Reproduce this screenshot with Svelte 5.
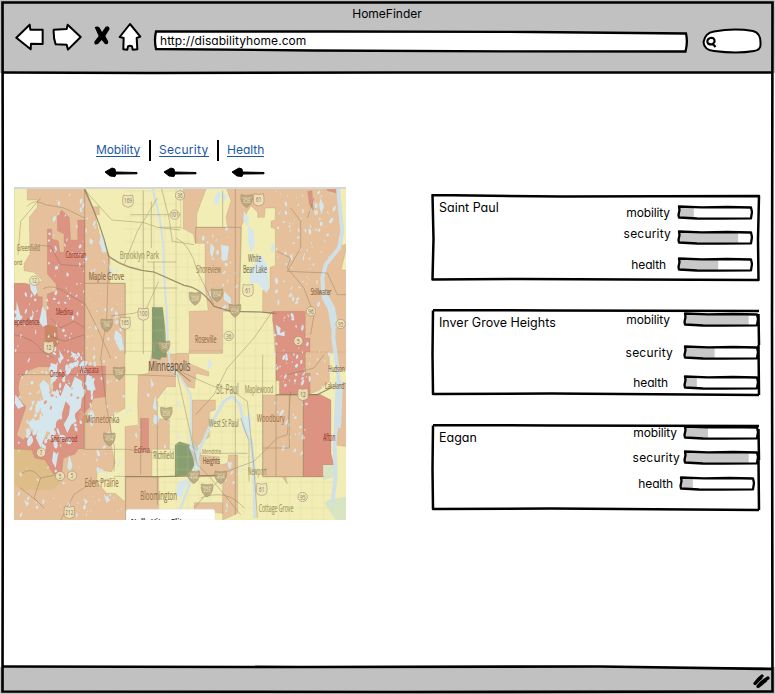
<script>
  const cards = [
    { name: 'Saint Paul', rows: [
      { label: 'mobility', gap: 11, pull: 7, right: 6, drop: -0.5, value: 20 },
      { label: 'security', gap: 5, pull: 6, right: 6, drop: 4, value: 80 },
      { label: 'health', gap: 15, pull: 11, right: 6, drop: -0.5, value: 53 } ] },
    { name: 'Inver Grove Heights', rows: [
      { label: 'mobility', gap: 3, pull: 13, right: 0, drop: 0, value: 86 },
      { label: 'security', gap: 17, pull: 10, right: 0, drop: -0.5, value: 40 },
      { label: 'health', gap: 14, pull: 15, right: 0, drop: 0, value: 16 } ] },
    { name: 'Eagan', rows: [
      { label: 'mobility', gap: 1, pull: 6, right: 0, drop: 0, value: 31 },
      { label: 'security', gap: 9, pull: 3, right: 0, drop: -0.5, value: 86 },
      { label: 'health', gap: 10, pull: 6, right: 4, drop: 0, value: 16 } ] }
  ];
  const links = ['Mobility', 'Security', 'Health'];

  let seed = 71;
  const rnd = () => (seed = (seed * 16807) % 2147483647) / 2147483647;
  const scatter = (zones, size) => zones.flatMap(([x, y, w, h, n]) =>
    Array.from({ length: n }, () => {
      const s = rnd();
      return { x: x + rnd() * w, y: y + rnd() * h, rx: (1 + s * s * 3.4) * size, ry: (2 + rnd() * s * 8) * size, a: rnd() * 60 - 20 };
    })
  );
  // Small lakes scattered over the suburbs: [x, y, width, height, count]
  const ponds = scatter([
    [90, 10, 130, 340, 45], [220, 60, 110, 300, 18], [0, 300, 330, 190, 70],
    [560, 120, 110, 240, 26], [785, 10, 180, 340, 90], [0, 480, 250, 180, 60],
    [10, 760, 330, 225, 55], [340, 600, 160, 200, 16], [780, 380, 110, 230, 44],
    [260, 490, 90, 300, 20], [780, 640, 100, 160, 22], [850, 490, 120, 130, 14], [630, 790, 60, 180, 14]
  ], 1.1);
  // Bays and islands that break up the shore of Lake Minnetonka
  const bays = scatter([[110, 510, 120, 120, 22], [50, 600, 190, 130, 44], [40, 690, 130, 80, 26]], 2.1);
  const islands = scatter([[70, 600, 160, 130, 16]], 1.3);

  const places = [
    ['Greenfield', 8, 188, 70, 28, '#9c8455'], ['ord', 0, 232, 24, 22, '#9c8455'],
    ['Corcoran', 155, 209, 62, 28, '#a13f32'], ['Brooklyn Park', 317, 214, 118, 34, '#a49a66'],
    ['Maple Grove', 224, 276, 106, 33, '#87683f'], ['Medina', 125, 382, 52, 27, '#a13f32'],
    ['ependence', 0, 411, 76, 27, '#93473c'], ['Shoreview', 547, 256, 74, 30, '#a18057'],
    ['White', 702, 222, 40, 31, '#77725b'], ['Bear Lake', 687, 256, 72, 31, '#77725b'],
    ['Stillwater', 890, 321, 62, 25, '#805f42'], ['Roseville', 543, 464, 64, 31, '#967047'],
    ['Orono', 107, 566, 44, 26, '#a13f32'], ['Wayzata', 196, 554, 58, 28, '#a13f32'],
    ['Minneapolis', 403, 550, 126, 41, '#5b5444'], ['Minnetonka', 213, 706, 103, 34, '#9d7650'],
    ['Shorewood', 110, 762, 80, 27, '#a13f32'], ['Edina', 360, 795, 48, 29, '#a4594c'],
    ['Richfield', 418, 814, 62, 34, '#92875a'], ['Eden Prairie', 212, 898, 102, 36, '#a27c4e'],
    ['Bloomington', 379, 936, 110, 36, '#987c52'], ['St. Paul', 607, 618, 67, 42, '#a09366'],
    ['Maplewood', 692, 615, 86, 30, '#a39664'], ['Hudson', 943, 552, 49, 26, '#866146'],
    ['Lakeland', 933, 604, 58, 26, '#8a7557'], ['Woodbury', 728, 701, 84, 34, '#9e754d'],
    ['West St Paul', 584, 718, 90, 33, '#91885e'], ['Afton', 928, 758, 36, 30, '#9a4037'],
    ['Mendota', 564, 798, 56, 24, '#a49762'], ['Heights', 566, 828, 52, 29, '#785d42'],
    ['Newport', 702, 862, 56, 30, '#9d9160'], ['Cottage Grove', 734, 972, 104, 33, '#a39865']
  ];
  const shields = [
    ['169', 342, 38, 1], ['101', 482, 80, 0], ['12', 61, 278, 0], ['165', 333, 404, 1], ['100', 388, 377, 1],
    ['12', 104, 477, 1], ['94', 278, 410, 2], ['94', 450, 476, 2], ['35E', 698, 37, 2], ['61', 734, 34, 1],
    ['35W', 543, 330, 2], ['694', 609, 320, 2], ['694', 663, 366, 2], ['61', 702, 306, 1], ['36', 644, 444, 0],
    ['96', 891, 370, 0], ['5', 853, 459, 0], ['95', 980, 408, 0], ['36', 498, 22, 0], ['394', 315, 554, 2],
    ['494', 286, 752, 2], ['35W', 457, 675, 2], ['7', 81, 794, 0], ['5', 138, 864, 0], ['5', 174, 863, 0],
    ['212', 166, 972, 1], ['494', 539, 865, 2], ['494', 620, 866, 2], ['35E', 579, 905, 2],
    ['61', 743, 903, 1], ['95', 866, 927, 0], ['12', 867, 618, 1]
  ];
  const roads = [
    'M210 4 Q262 110 284 205 L278 390 L260 510 L278 660 L302 780 L300 850',
    'M212 6 L293 96 L390 104 L430 118 L498 126', 'M288 210 Q340 246 420 252 L510 292 Q560 298 600 355 L650 370 L740 372 L790 376',
    'M212 4 V786', 'M86 302 Q120 285 165 320 L214 348 L250 420 L290 510', 'M212 286 H334 V498', 'M0 440 Q60 450 85 490 L120 510',
    'M388 8 V498', 'M430 30 L370 130 L330 230', 'M442 0 L465 90 L475 160 L540 170', 'M434 280 L398 360 L360 376 L290 384',
    'M350 80 H500 M400 222 H486 M434 118 H500 M412 40 V180 M420 222 V470 M390 300 H490',
    'M12 560 H360 L486 565', 'M212 784 H340 L450 798', 'M300 865 L435 866 L620 862 L652 845 L720 820 L790 750 L820 740 L830 610',
    'M486 150 Q530 170 550 250 L600 350', 'M664 0 V980', 'M746 500 V866 H930', 'M786 620 H910 L950 600 L996 585',
    'M868 620 V866 M826 620 V780 H746', 'M545 118 H682 L676 368 M545 118 V166 M626 8 V118',
    'M774 372 L720 450 L640 540 L600 620 L545 680', 'M486 545 L520 560 L600 596 L650 605 L700 640 L720 840 L730 990',
    'M335 866 V996', 'M430 640 V950 M380 690 V860', 'M830 60 L860 100 L860 180 L820 250 L940 255 L970 320 L996 320',
    'M790 190 L830 210 L820 240 L870 300 L900 380 L890 440', 'M786 500 V866 M900 30 L880 90', 'M930 500 L900 540 L820 560',
    'M140 996 L180 920 L230 885 L300 870', 'M20 860 Q50 830 80 870 L60 930 L90 960 M80 870 L130 860 M20 900 L70 940',
    'M110 390 L140 420 L180 400 L212 420 M100 440 L150 460 L212 440', 'M490 560 L550 830 L590 870 L680 980',
    'M620 796 H700 M680 690 L705 760 V880 M540 960 L620 870', 'M40 55 Q60 30 95 50 L150 60 L212 90', 'M12 200 L20 100 L80 30',
    'M60 170 L110 175 L140 230 L212 235', 'M560 930 Q640 900 690 960'
  ];
</script>

{#snippet place(t, x, y, w, size, color)}
  <text {x} {y} font-size={size} textLength={w} lengthAdjust="spacingAndGlyphs" fill={color} stroke={color} stroke-width=".5">{t}</text>
{/snippet}

<div class="window">
  <header>
    <div class="title">HomeFinder</div>
    <div class="toolbar">
      <svg class="back" width="30" height="32" viewBox="45 66 90 96"><path class="ink" d="M49 113 L89 74 L91 89 L128 89 L128 132 L93 131 L92 148 Z" /></svg>
      <svg class="next" width="30" height="32" viewBox="156 66 90 96"><path class="ink" d="M161 89 L200 87 L203 74 L242 111 L204 149 L200 134 L167 133 Q160 115 161 89 Z" /></svg>
      <svg class="stop" width="20" height="32" viewBox="276 66 60 96"><path d="M284 82 Q292 76 299 83 L306 96 L317 80 Q328 76 329 87 L316 108 L325 125 Q324 136 315 132 L305 120 L294 132 Q282 137 283 125 L296 108 Z" /></svg>
      <svg class="home" width="26" height="32" viewBox="351 66 78 96"><path class="ink" d="M359 111 L390 72 L421 110 L410 114 L412 148 L398 149 L396 139 Q390 135 384 139 L382 149 L370 148 L371 114 Z" /></svg>
      <div class="url">
        <svg width="536" height="32" viewBox="0 0 536 32"><path d="M3 9.500 L180 9.500 L380 10 L533 11.5 Q535 20 532.500 29.500 L350 29.300 L160 28.500 L3 27 Q1 18 3 9.500 Z" fill="#fff" stroke="#000" stroke-width="2.3" /></svg>
        <span>http://disabilityhome.com</span>
      </div>
      <svg class="search" width="62" height="32" viewBox="0 0 62 32"><path d="M13 9.500 Q33 6 52 9 Q60 11 59.500 22 Q60 28 53 29 Q36 32 13 29 Q3 28 2.500 20 Q4 11 13 9.500 Z" fill="#fff" stroke="#000" stroke-width="2" /><path d="M9 16 Q14 15 13.500 20 Q11 24 7 21.500 Q5 18 9 16 M11.500 21.500 L14.500 25" fill="none" stroke="#000" stroke-width="2.2" /></svg>
    </div>
  </header>

  <main>
    <section class="left">
      <nav>
        {#each links as link, i}
          {#if i}<i class="sep"></i>{/if}
          <div class="tab tab{i}">
            <a href="#{link}">{link}</a>
            <svg width="33" height="12" viewBox="0 0 33 12"><path d="M0 5 L7 1 L10 2 L10.500 5 L32 5.500 V6.800 L11 7 L10 9.500 L5 9 Z" stroke="#000" stroke-width="1" stroke-linejoin="round" /></svg>
          </div>
        {/each}
      </nav>
      <svg class="map" width="332" height="333" viewBox="0 -3 996 999" font-family="'Open Sans', sans-serif">
        <defs>
          <pattern id="streets" width="34" height="38" patternUnits="userSpaceOnUse"><path d="M0 9 H34 M11 0 V38" stroke="#d5cd91" stroke-width="1.5" fill="none" opacity=".5" /></pattern>
        </defs>
        <rect y="-3" width="996" height="999" fill="#e6c09a" />
        <g stroke="#a08a68" stroke-opacity=".45" stroke-width="1.500">
          <g transform="translate(-12 -12)">
            <path class="y" d="M12 10H52V48H82V70L58 100L60 210L42 240V260L72 265L98 290L70 300L12 298Z" />
            <path class="y" d="M225 10H520V510H345V298H300V220L280 170L268 150L255 92H268V68H248Z" />
            <path class="r" d="M112 135H125V165L145 170L150 205H162V150L142 140V98L155 78L178 100L182 168H203V108H224V520H110V418L112 330L140 320L138 300L112 270Z" />
            <path class="r" d="M12 298H45L75 310L85 338H97V395L110 420V520H12Z" />
            <path d="M105 420L140 430L145 480L120 500L105 480Z" fill="#cd8767" />
            <path class="g" d="M426 370H458L465 430L470 520H426Z" />
          </g>
          <g transform="translate(486 -12)">
            <path class="y" d="M0 10H14V130L52 150L58 178H87V310L97 380L40 382V510H0Z" />
            <path class="y" d="M92 10H150L165 50L150 100L155 130H62V90Z" />
            <path class="y" d="M213 85L225 65L245 85V100L265 100L268 72H298V108L285 112V130L298 135V245L282 250V315L260 320V385L295 390L290 400L298 520H140V382H188L192 240L195 130Z" />
            <path class="y" d="M485 10H512V180L498 185L490 60ZM512 190L495 258H512Z" />
            <path class="r" d="M290 382H388V462H402V520H300L298 450L290 410ZM395 22L408 20L412 80L400 60ZM450 12H485V28L455 20Z" />
          </g>
          <g transform="translate(-12 486)">
            <path d="M12 297L65 300L110 330L155 395L125 420H30L12 400Z" fill="#dfbd88" stroke="none" />
            <path class="r" fill-rule="evenodd" d="M12 8H215L235 48H287V140L250 145L240 170L222 190V297H205L195 312L160 325L155 372H130L105 330L75 325L65 300L12 297ZM30 85L60 60L85 50L115 50L130 70V250L100 270L60 245L40 270L20 255L38 200L48 170L30 150L25 110Z" />
            <path class="y" d="M345 4H426L415 70L385 75L383 160L385 225L345 230V455L315 430L290 430L260 395L262 360L305 365L315 340L305 290L300 200L345 175Z" />
            <path class="y" d="M440 150L470 110L512 110V300H478V210L440 205Z" />
            <path class="y" d="M426 298H512V480H446V382H426Z" />
            <path class="r" d="M393 205H416V300H393Z" />
            <path class="g" d="M426 0H464L450 30L426 25Z" />
          </g>
          <g transform="translate(486 486)">
            <rect x="0" y="10" width="512" height="500" fill="#f1edb5" stroke="none" />
            <path class="o" d="M0 10H38V40L98 65V78L60 70L55 115L35 110L0 60ZM40 10H138V2H40ZM48 150H118V180L100 185V260L60 290L48 270ZM70 315L130 320V345L155 340L158 315H185V490L140 510V380H65ZM55 458H140V490L55 480ZM260 135H382V380H330L334 402L318 380H260Z" />
            <path class="o" d="M388 6H460V95L430 120L402 132V70H388ZM482 6H512V60L485 60ZM495 100H512V290L480 285L490 180Z" />
            <path class="r" d="M300 8H388V70H402V132H310V92H300ZM382 135L430 132L465 150V310L474 345H442V380H382Z" />
            <path d="M442 345H475V380L442 390ZM455 450L512 440V512H480L445 460Z" fill="#d8e5c2" stroke="none" />
            <path class="g" d="M-3 285L10 275L45 285L55 345L40 375L-3 378Z" />
            <path d="M38 290L55 275L75 310L60 345Z" fill="#c8cec2" />
          </g>
        </g>
        <g fill="url(#streets)"><path d="M333 0H498V490H333ZM486 120H570V380H486ZM626 370H780V980H626ZM486 600H700V980H486ZM700 860H960V996H700ZM425 600H486V950H425Z" /></g>
        <g fill="#d5e6ed">
          {#each ponds as p}<ellipse cx={p.x} cy={p.y} rx={p.rx} ry={p.ry} transform="rotate({p.a} {p.x} {p.y})" />{/each}
          {#each bays as p}<ellipse cx={p.x} cy={p.y} rx={p.rx} ry={p.ry} transform="rotate({p.a} {p.x} {p.y})" />{/each}
          <path d="M262 134L272 170L280 190L268 195L256 165ZM228 150L238 158L234 170L226 164ZM46 268L62 280L70 312L62 325L50 305ZM85 355L95 370L100 410L86 416L76 400ZM8 340L20 385L14 410L6 390ZM305 425L322 440L330 485L318 488L300 450ZM282 225L300 255L292 265Z" />
          <path d="M610 10L622 15L612 50L598 45ZM624 15L640 22L628 45ZM703 110L720 130L722 175L710 190L702 160ZM690 70L705 90L700 115L688 95ZM708 250L740 200L760 230L765 300L758 315L730 285L706 285ZM620 170L645 175L640 215L625 220ZM590 165L602 180L594 210L588 195ZM630 310L650 330L652 350L630 335ZM785 410L800 420L798 435L812 430V445L790 440ZM920 30L930 55L922 80L915 50ZM774 165L782 172L778 195L770 190Z" />
          <path d="M76 590L88 575L105 590L108 620L122 608L140 625L155 585L170 600L182 566L205 580L202 610L210 580L200 660L180 680L188 700L172 710L160 735L150 710L165 680L168 655L155 640L140 690L128 700L118 735L98 730L80 780L66 750L72 725L52 725L42 705L58 690L70 705L88 680L80 660L64 655L70 640L88 635Z" />
          <path d="M218 555L235 570L245 605L230 610L215 590ZM110 525L130 530L128 565L108 560ZM135 485L150 510L140 520ZM170 490L190 500L178 512ZM85 765L96 775L92 800L80 785ZM118 790L132 800L125 840L114 820ZM165 800L175 830L170 850L160 840ZM4 620L20 640L30 655L12 662L2 645ZM424 620L430 670L416 660ZM410 570L420 590L412 600ZM420 680L438 685L430 710L418 705ZM490 885L525 870L500 930L488 920ZM690 690L710 675V730L696 740ZM585 510L594 530L580 550ZM252 840L270 845L262 855ZM208 930L222 940L215 950ZM30 935L45 945L38 956ZM270 920L290 935L278 945Z" />
        </g>
        <g fill="#e0a489">{#each islands as p}<ellipse cx={p.x} cy={p.y} rx={p.rx} ry={p.ry} transform="rotate({p.a} {p.x} {p.y})" />{/each}</g>
        <g fill="none" stroke="#cfe1e6" stroke-linejoin="round">
          <path d="M416 0L438 95L448 170L450 260L458 370L462 470L468 540L500 570L530 620L530 780L555 800" stroke-width="6" />
          <path d="M555 850L550 800L590 710L630 640L655 625L678 650L690 720L712 760L720 850L722 990" stroke-width="9" />
          <path d="M555 800L530 880L500 960L488 985" stroke-width="7" />
          <path d="M972 0L985 130L975 180L935 230L925 270L928 320L960 380L958 450L970 540L978 610L968 700L962 760L965 860L955 950" stroke-width="12" />
          <path d="M932 325L952 360L962 420M976 580L970 720" stroke-width="22" />
        </g>
        <g fill="none" stroke="#74684f" stroke-width="2" opacity=".5" stroke-linejoin="round">{#each roads as d}<path {d} />{/each}</g>
        <g fill="none" stroke="#817555" stroke-width="3.500" opacity=".65"><path d="M212 4Q262 110 284 205Q340 246 420 252L510 292Q560 298 600 355L650 370L740 372L780 376M786 620H910L950 600M486 545L530 580M335 866L435 866L620 862" /></g>
        {#each shields as [t, x, y, k]}
          <g transform="translate({x} {y})" fill={k === 2 ? '#b3a37b' : '#efe4bd'} stroke="#a08d65" stroke-width="2" opacity=".85">
            {#if k === 0}<circle r="14" />{:else if k === 1}<path d="M-14-17Q0-12 14-17Q19 8 12 16L0 20L-12 16Q-19 8-14-17Z" />{:else}<path d="M-17-17Q0-12 17-17Q21 10 0 22Q-21 10-17-17Z" /><path d="M-17-9H17" stroke="#d9c79a" />{/if}
            <text y="8" font-size="20" text-anchor="middle" textLength={t.length * 8} lengthAdjust="spacingAndGlyphs" stroke="none" fill={k === 2 ? '#f0e4c0' : '#776846'}>{t}</text>
          </g>
        {/each}
        {#each places as [t, x, y, w, size, color]}{@render place(t, x, y, w, size, color)}{/each}
        <path d="M336 996V970Q336 964 344 964H594Q603 964 603 972V996Z" fill="#fff" stroke="#ddd" stroke-width="1" />
        <text x="350" y="1010" font-size="24" font-weight="700" textLength="155" lengthAdjust="spacingAndGlyphs" fill="#333">Nulla Vitae Elit</text>
        <path d="M0 0H996" stroke="#d6d6d6" stroke-width="6" />
      </svg>
    </section>

    <section class="right">
      {#each cards as card, c}
        <article>
          <h2 class="name{c}">{card.name}</h2>
          <svg class="edge" width="330" height="90" viewBox="0 0 330 90">
            <path d={c ? 'M2 1L120 1.500L328 2M2 1.500L1.500 45L2 85L120 84.500L328 86M327.500 5L328 36M327.500 36L328 86' : 'M1.500 1L130 2.500L328 2L327 45L327.500 86L200 85.500L90 85L1.500 85.500L2.500 45Z'} />
          </svg>
          <div class="metrics">
            {#each card.rows as row}
              <div class="row" style="margin-top:{row.gap}px;padding-right:{row.right}px">
                <span class={row.label} style="margin-right:{row.pull}px">{row.label}</span>
                <svg width="76" height="15" viewBox="0 0 76 15" style="margin-top:{row.drop}px">
                  <path d="M2 2H74V13H2Z" fill="#fff" />
                  <rect x="2" y="2" width={row.value * 0.74} height="11" fill="#c8c8c8" />
                  <path d="M2 1.500L25 2.300L50 2L74 2.500L75 7L74 13.300L40 13.700L20 13.500L2 12.500L1.500 10L2.500 5Z" fill="none" stroke="#000" stroke-width="2.3" stroke-linejoin="round" />
                </svg>
              </div>
            {/each}
          </div>
        </article>
      {/each}
    </section>
  </main>

  <footer><svg width="18" height="15" viewBox="0 0 18 15"><path d="M2 9.500Q5 5 9 2M5 12.500Q8 8 15 4" fill="none" stroke="#000" stroke-width="3.200" stroke-linecap="round" /><path d="M2 10.500L9 4M6 13L14 6.500" stroke="#000" stroke-width="1.500" /></svg></footer>

  <svg class="frame" width="775" height="694" viewBox="0 0 775 694">
    <path d="M2.500 2.500H772.500L772 320L772.500 691.500L400 692L2.500 691.500L3 350Z" />
    <path d="M3 72.500L150 73L400 72.500L773 72.500M3 666.500L300 667L600 666.500L773 669" />
  </svg>
</div>

<style>
  :global(body) { margin: 0; background: #fff; }
  .window { position: relative; width: 775px; height: 694px; display: flex; flex-direction: column; overflow: hidden; background: #fff; color: #000; font: 12px/16px Inter, 'Noto Sans', sans-serif; font-feature-settings: 'cv11'; }
  .frame { position: absolute; inset: 0; pointer-events: none; fill: none; stroke: #000; stroke-width: 2.6; }
  svg { display: block; flex: none; }
  header { height: 73px; background: #c1c1c1; }
  .title { padding-top: 5px; height: 17px; padding-right: 1px; text-align: center; line-height: 17px; }
  .toolbar { display: flex; padding-left: 15px; }
  .ink { fill: #fff; stroke: #000; stroke-width: 6; stroke-linejoin: round; }
  .next { margin-left: 7px; }
  .stop { margin-left: 10px; }
  .home { margin-left: 5px; }
  .url { display: grid; margin-left: 10px; width: 536px; }
  .url > * { grid-area: 1 / 1; }
  .url span { padding: 11px 0 0 7px; letter-spacing: .06px; }
  .search { margin-left: 12px; }
  main { flex: 1; display: flex; }
  .left { width: 332px; margin-left: 14px; }
  nav { display: flex; height: 45px; padding: 69px 0 0 82px; }
  .tab a { display: block; line-height: 16px; height: 14px; width: max-content; border-bottom: 1px solid #1b58a5; color: #1b58a5; text-decoration: none; }
  .tab svg { margin-top: 10px; }
  .tab { width: 45px; }
  .tab0 a { letter-spacing: -.12px; }
  .tab0 svg { margin-left: 9px; }
  .tab1 { width: 50px; }
  .tab1 a { letter-spacing: .3px; }
  .tab1 svg, .tab2 svg { margin-left: 5px; }
  .sep { width: 2px; height: 21px; margin: -2px 8px 0; background: #000; }
  .map .y { fill: #f1edb5; }
  .map .r { fill: #dc9382; }
  .map .o { fill: #e6c09a; }
  .map .g { fill: #879e70; }
  .right { width: 328px; margin-left: 85px; padding-top: 121px; }
  article { position: relative; display: flex; justify-content: space-between; height: 88px; width: 328px; margin-bottom: 27px; }
  .edge { position: absolute; left: 0; top: 0; fill: none; stroke: #000; stroke-width: 2.5; stroke-linejoin: round; }
  h2 { margin: 6px 0 0 8px; font-size: 12.5px; font-weight: 400; height: 16px; white-space: nowrap; }
  .row { position: relative; display: flex; justify-content: flex-end; height: 16px; }
  .mobility { letter-spacing: -.12px; }
  .security { letter-spacing: .2px; }
  .health { letter-spacing: -.15px; margin-left: 0; }
  footer { display: flex; justify-content: flex-end; align-items: flex-start; height: 27px; background: #c1c1c1; }
  footer svg { margin: 7px 4px 0 0; }
</style>
